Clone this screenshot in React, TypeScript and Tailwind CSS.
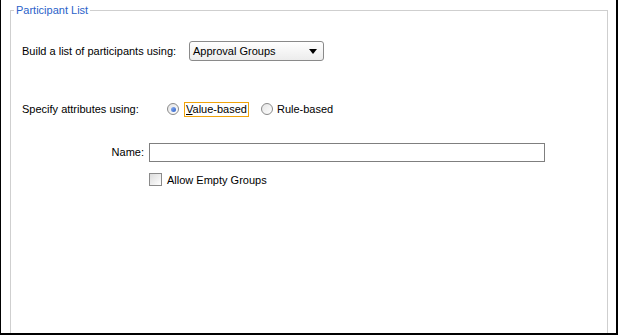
const font = { fontFamily: '"Liberation Sans", Arial, sans-serif' };

const Radio = ({ checked }: { checked?: boolean }) => (
    <span className="flex h-[12px] w-[12px] items-center justify-center rounded-full border border-[#8a8a8a] bg-gradient-to-br from-[#e4e4e4] to-white">
        {checked && (
            <span className="h-[5px] w-[5px] rounded-full bg-gradient-to-br from-[#8fb0ee] to-[#2c5fc9]" />
        )}
    </span>
);

const App = () => {
    return (
        <div
            className="h-[335px] w-[618px] overflow-hidden border-b-2 border-l border-r-2 border-black bg-white text-[11px] text-black"
            style={font}
        >
            {/* Participant List panel */}
            <fieldset className="ml-[9px] mt-[3px] h-[400px] w-[598px] border border-[#cfcfcf]">
                <legend className="ml-[3px] px-[2px] text-[11px] leading-[14px] text-[#2a62c9]">
                    Participant List
                </legend>

                {/* Build list row */}
                <div className="mt-[24px] flex items-center pl-[11px]">
                    <span className="w-[167px]">Build a list of participants using:</span>
                    <div className="flex h-[20px] w-[135px] items-center justify-between rounded-[3px] border border-[#8a8a8a] bg-gradient-to-b from-white to-[#ececec] pl-[3px] pr-[6px]">
                        <span>Approval Groups</span>
                        <svg width="8" height="5" viewBox="0 0 8 5">
                            <path d="M0 0h8L4 5z" fill="#000" />
                        </svg>
                    </div>
                </div>

                {/* Attributes row */}
                <div className="mt-[40px] flex items-center pl-[11px]">
                    <span className="w-[145px]">Specify attributes using:</span>
                    <Radio checked />
                    <span className="ml-[5px] border border-[#f0a30a] px-[1px] leading-[13px]">
                        <span className="underline">V</span>alue-based
                    </span>
                    <span className="ml-[12px]">
                        <Radio />
                    </span>
                    <span className="ml-[4px]">Rule-based</span>
                </div>

                {/* Name row */}
                <div className="mt-[25px] flex items-center pl-[11px]">
                    <span className="w-[122px] text-right">Name:</span>
                    <input
                        type="text"
                        className="ml-[5px] h-[19px] w-[396px] border border-[#7f7f7f] bg-white outline-none"
                    />
                </div>

                <div className="mt-[10px] flex items-center pl-[138px]">
                    <span className="h-[13px] w-[13px] border border-[#8a8a8a] bg-gradient-to-br from-[#dcdcdc] to-white" />
                    <span className="ml-[5px]">Allow Empty Groups</span>
                </div>
            </fieldset>
        </div>
    );
};

export default App;
